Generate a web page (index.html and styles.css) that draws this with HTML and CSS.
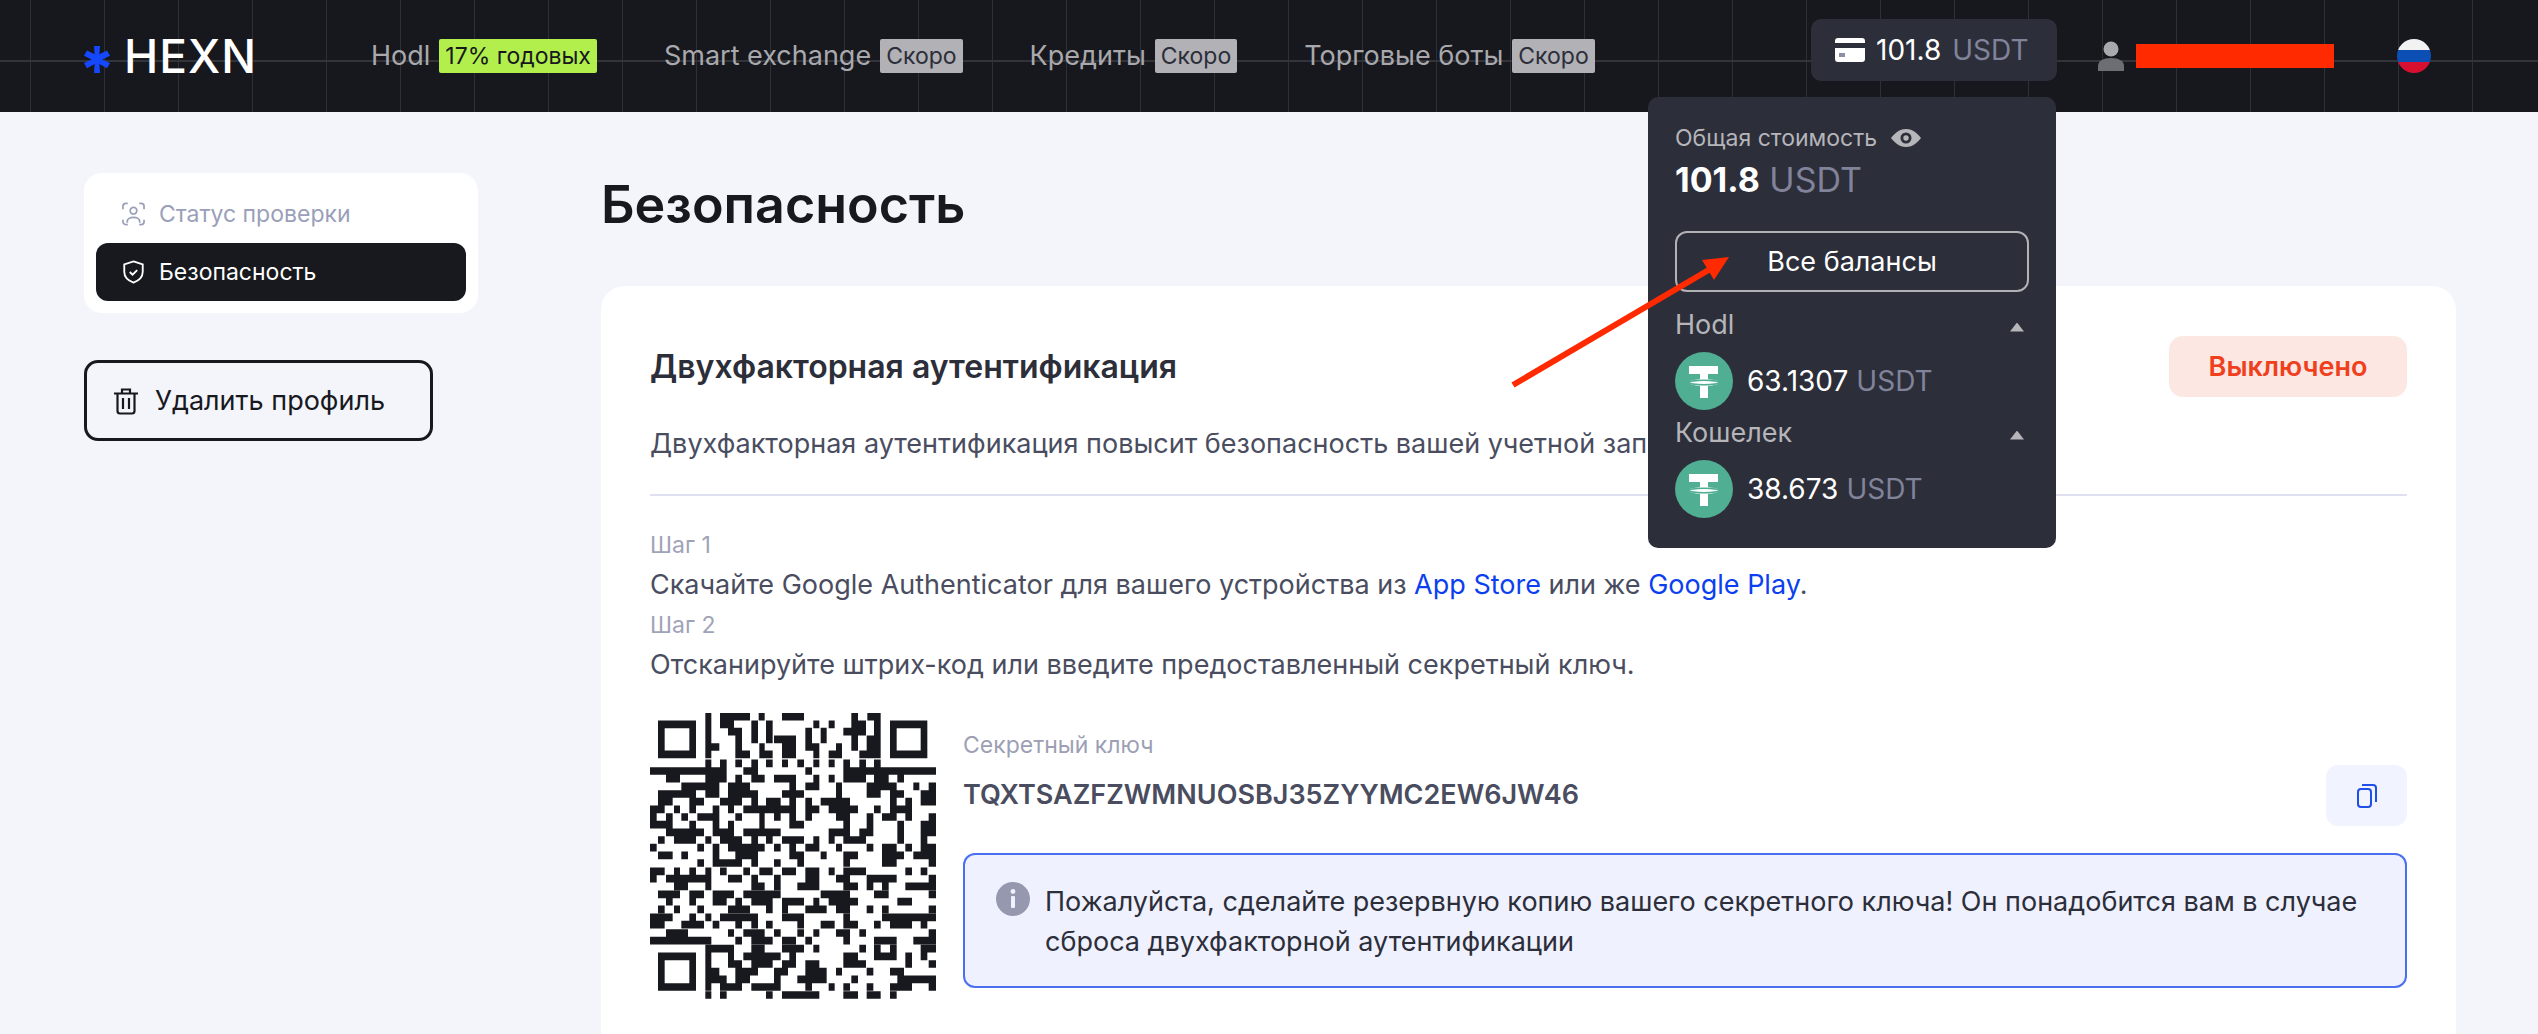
FILE: index.html
```html
<!DOCTYPE html>
<html lang="ru">
<head>
<meta charset="utf-8">
<title>HEXN — Безопасность</title>
<link rel="stylesheet" href="styles.css">
</head>
<body>
<header class="topbar">
  <a class="logo">
    <svg class="logo-star" viewBox="0 0 26 30"><path d="M10 2h6l-.6 8.200L23 6.500l3 5.300-7.600 3.700L26 19l-3 5.300-7.600-4.200L16 29h-6l.6-8.900L3 24.300 0 19l7.600-3.500L0 11.800l3-5.300 7.600 3.700z"/></svg>
    <span class="logo-text">HEXN</span>
  </a>
  <nav class="nav">
    <a class="nav-item">Hodl <span class="tag tag-green">17% годовых</span></a>
    <a class="nav-item">Smart exchange <span class="tag">Скоро</span></a>
    <a class="nav-item">Кредиты <span class="tag">Скоро</span></a>
    <a class="nav-item">Торговые боты <span class="tag">Скоро</span></a>
  </nav>
  <div class="top-right">
    <div class="balance-wrap">
      <div class="balance-pill">
        <svg class="wallet" viewBox="0 0 30 24"><path fill="#fff" d="M3 0h24a3 3 0 0 1 3 3v2H0V3a3 3 0 0 1 3-3zM0 10h30v11a3 3 0 0 1-3 3H3a3 3 0 0 1-3-3z"/><rect x="4" y="15" width="6" height="4" fill="#8d90a3"/></svg>
        <span class="amount">101.8</span> <span class="unit">USDT</span>
      </div>
      <div class="popup">
        <div class="popup-label">Общая стоимость
          <svg class="eye" viewBox="0 0 30 18"><path fill="#b5b5ba" fill-rule="evenodd" d="M15 0c7 0 12 5 15 9-3 4-8 9-15 9S3 13 0 9c3-4 8-9 15-9zm0 3.500a5.500 5.500 0 1 0 0 11 5.500 5.500 0 0 0 0-11zm0 2.800a2.700 2.700 0 1 1 0 5.400 2.700 2.700 0 0 1 0-5.400z"/></svg>
        </div>
        <div class="popup-total"><b>101.8</b> <span class="unit">USDT</span></div>
        <button class="popup-btn">Все балансы</button>
        <div class="popup-group">Hodl <span class="caret"></span></div>
        <div class="coin-row">
          <svg class="tether" viewBox="0 0 58 58"><circle cx="29" cy="29" r="29" fill="#50ae93"/><path fill="#fff" d="M14 14h29v8H33v5.200c6 .3 11 1.500 11 3.300s-5 3-11 3.300V46h-8V33.800c-6-.3-11-1.500-11-3.300s5-3 11-3.300V22H14z"/><ellipse cx="29" cy="30.500" rx="15" ry="2.200" fill="none" stroke="#50ae93" stroke-width="1.600"/></svg>
          <span class="coin-amt">63.1307</span> <span class="unit">USDT</span>
        </div>
        <div class="popup-group">Кошелек <span class="caret"></span></div>
        <div class="coin-row">
          <svg class="tether" viewBox="0 0 58 58"><circle cx="29" cy="29" r="29" fill="#50ae93"/><path fill="#fff" d="M14 14h29v8H33v5.200c6 .3 11 1.500 11 3.300s-5 3-11 3.300V46h-8V33.800c-6-.3-11-1.500-11-3.300s5-3 11-3.300V22H14z"/><ellipse cx="29" cy="30.500" rx="15" ry="2.200" fill="none" stroke="#50ae93" stroke-width="1.600"/></svg>
          <span class="coin-amt">38.673</span> <span class="unit">USDT</span>
        </div>
      </div>
    </div>
    <div class="user">
      <svg class="user-icon" viewBox="0 0 26 30"><circle cx="13" cy="8" r="7.500" fill="#a9a9ad"/><path d="M0 30v-5c0-5 5-8 13-8s13 3 13 8v5z" fill="#6d6e73"/></svg>
      <div class="redact"></div>
    </div>
    <svg class="flag" viewBox="0 0 34 34"><defs><clipPath id="flagclip"><circle cx="17" cy="17" r="17"/></clipPath></defs><g clip-path="url(#flagclip)"><rect width="34" height="11" fill="#f2f2f2"/><rect y="11" width="34" height="12" fill="#0b4fb5"/><rect y="23" width="34" height="11" fill="#d8102f"/></g></svg>
  </div>
</header>

<main class="page">
  <aside class="side">
    <div class="side-card">
      <a class="side-link">
        <svg class="side-icon" viewBox="0 0 24 24" fill="none" stroke="#9a9fba" stroke-width="1.800"><path d="M1 7V4a3 3 0 0 1 3-3h2M18 1h2a3 3 0 0 1 3 3v3M23 18v2a3 3 0 0 1-3 3h-2M6 23H4a3 3 0 0 1-3-3v-2"/><circle cx="12" cy="8.500" r="3.500"/><path d="M5.500 21v-1.500c0-2.500 3-4 6.500-4s6.500 1.500 6.500 4V21"/></svg>
        Статус проверки
      </a>
      <a class="side-link side-active">
        <svg class="side-icon" viewBox="0 0 24 26" fill="none" stroke="#fff" stroke-width="2"><path d="M12 1.500l10 3.300v8c0 6-4.500 9.700-10 11.700-5.500-2-10-5.700-10-11.700v-8z"/><path d="M8 13l3 3 5-5"/></svg>
        Безопасность
      </a>
    </div>
    <button class="delete-btn">
      <svg class="trash" viewBox="0 0 24 28" fill="none" stroke="#18191e" stroke-width="2.200"><path d="M0 6.500h24M8 6V2.500h8V6M3.500 7v17a2.500 2.500 0 0 0 2.500 2.500h12a2.500 2.500 0 0 0 2.500-2.500V7M9 11v11M15 11v11"/></svg>
      Удалить профиль
    </button>
  </aside>

  <section class="content">
    <h1 class="page-title">Безопасность</h1>
    <div class="card">
      <div class="card-head">
        <h2 class="card-title">Двухфакторная аутентификация</h2>
        <span class="status">Выключено</span>
      </div>
      <p class="desc">Двухфакторная аутентификация повысит безопасность вашей учетной записи.</p>
      <hr class="divider">
      <div class="step-label">Шаг 1</div>
      <div class="step-text">Скачайте Google Authenticator для вашего устройства из <a class="link">App Store</a> или же <a class="link">Google Play</a>.</div>
      <div class="step-label">Шаг 2</div>
      <div class="step-text">Отсканируйте штрих-код или введите предоставленный секретный ключ.</div>
      <div class="secret">
        <svg class="qr" viewBox="60 36 858 858">
          <path class="qr-cells" d="M226 47H244M270 47H360M386 47H404M456 47H522M664 47H684M712 47H752
M84 70H198M226 70H244M270 70H312M364 70H384M408 70H428M550 70H568M596 70H614M664 70H708M732 70H752M780 70H892
M84 92H104M178 92H198M226 92H244M294 92H336M364 92H384M408 92H428M526 92H546M572 92H590M640 92H708M732 92H752M780 92H800M872 92H892
M84 115H104M178 115H198M226 115H244M316 115H336M364 115H384M408 115H428M432 115H498M526 115H546M572 115H590M664 115H684M710 115H752M780 115H800M872 115H892
M84 138H104M178 138H198M226 138H268M316 138H336M388 138H404M456 138H498M526 138H568M618 138H636M664 138H684M710 138H752M780 138H800M872 138H892
M84 160H198M226 160H244M316 160H360M388 160H428M456 160H498M550 160H568M596 160H636M688 160H752M780 160H892
M226 187H244M270 187H290M316 187H336M364 187H384M408 187H428M456 187H474M502 187H522M550 187H568M596 187H614M640 187H660M688 187H708M732 187H752
M60 210H290M340 210H384M526 210H546M640 210H918
M108 233H150M226 233H290M316 233H336M364 233H404M432 233H498M550 233H568M596 233H614M640 233H708M732 233H776M802 233H822
M154 256H268M294 256H360M478 256H498M526 256H568M618 256H636M710 256H800M850 256H868M896 256H918
M84 279H198M226 279H268M294 279H384M456 279H522M618 279H636M710 279H752M780 279H822M872 279H918
M84 302H128M178 302H222M270 302H336M364 302H384M408 302H452M478 302H498M526 302H546M572 302H660M780 302H800M826 302H846M872 302H918
M60 325H104M132 325H150M178 325H198M248 325H268M294 325H312M340 325H498M526 325H568M596 325H684M732 325H752M780 325H846
M60 348H80M108 348H128M154 348H174M202 348H268M316 348H336M388 348H404M432 348H452M478 348H498M526 348H546M618 348H660M710 348H730M756 348H800M826 348H846M896 348H918
M60 371H128M178 371H198M248 371H268M294 371H312M388 371H404M478 371H522M640 371H660M710 371H730M802 371H822M872 371H918
M108 394H222M248 394H312M340 394H452M596 394H660M688 394H730M802 394H822M872 394H918
M84 417H104M132 417H198M226 417H244M270 417H336M364 417H384M408 417H428M456 417H522M550 417H568M596 417H614M640 417H708M802 417H822M872 417H892
M60 440H80M202 440H222M248 440H268M294 440H404M432 440H452M478 440H498M526 440H568M618 440H636M710 440H730M756 440H800M826 440H846M872 440H918
M84 463H128M154 463H174M248 463H268M316 463H384M478 463H522M572 463H590M640 463H684M756 463H822M850 463H918
M202 486H222M248 486H336M364 486H384M432 486H452M502 486H522M640 486H660M756 486H800M896 486H918
M60 511H104M132 511H150M178 511H198M226 511H244M270 511H290M340 511H360M388 511H428M456 511H498M526 511H568M596 511H614M640 511H708M826 511H846M872 511H892
M60 533H80M108 533H244M294 533H336M364 533H384M432 533H452M526 533H568M618 533H660M710 533H800M896 533H918
M132 556H174M226 556H244M364 556H404M432 556H452M502 556H568M640 556H684M710 556H730M756 556H776M826 556H918
M84 580H150M178 580H222M248 580H312M340 580H452M572 580H660M732 580H776M896 580H918
M108 602H128M178 602H198M248 602H290M316 602H336M364 602H428M456 602H522M550 602H568M596 602H684M802 602H846
M84 625H104M132 625H150M202 625H222M294 625H360M408 625H428M456 625H474M526 625H590M618 625H660M710 625H730M756 625H776M896 625H918
M60 649H128M178 649H198M226 649H244M270 649H384M456 649H522M640 649H660M756 649H918
M60 671H104M154 671H222M248 671H268M316 671H336M364 671H384M408 671H428M502 671H522M572 671H614M640 671H684M732 671H752M780 671H846M872 671H892
M108 696H174M294 696H312M340 696H404M432 696H452M502 696H522M550 696H568M618 696H660M688 696H708M896 696H918
M60 719H244M316 719H336M364 719H428M456 719H498M526 719H546M640 719H660M732 719H800M850 719H918
M226 743H312M364 743H404M456 743H522M550 743H568M688 743H708M732 743H752M780 743H800M872 743H918
M84 766H198M226 766H244M294 766H312M340 766H452M478 766H498M640 766H684M732 766H800M826 766H846M872 766H892
M84 789H104M178 789H198M226 789H244M294 789H336M364 789H428M456 789H498M526 789H568M640 789H708M826 789H846M896 789H918
M84 812H104M178 812H198M226 812H268M316 812H384M432 812H474M526 812H590M618 812H636M710 812H730M780 812H822
M84 835H104M178 835H198M226 835H290M316 835H360M432 835H452M502 835H590M664 835H684M802 835H918
M84 858H198M226 858H244M270 858H336M364 858H452M526 858H546M596 858H614M640 858H660M710 858H730M780 858H846M896 858H918
M226 882H244M270 882H290M408 882H428M456 882H568M640 882H684M710 882H752M780 882H800"/>
        </svg>
        <div class="secret-body">
          <div class="secret-top">
            <div class="secret-key">
              <div class="secret-label">Секретный ключ</div>
              <div class="secret-value">TQXTSAZFZWMNUOSBJ35ZYYMC2EW6JW46</div>
            </div>
            <button class="copy-btn">
              <svg class="copy" viewBox="0 0 20 24" fill="none" stroke="#1f4ee8" stroke-width="2"><rect x="1" y="5" width="13" height="18" rx="3"/><path d="M5 1h11a3 3 0 0 1 3 3v14"/></svg>
            </button>
          </div>
          <div class="alert">
            <svg class="info" viewBox="0 0 34 34"><circle cx="17" cy="17" r="17" fill="#9598ae"/><rect x="15" y="14" width="4" height="12" rx="1" fill="#eff1fe"/><circle cx="17" cy="9.500" r="2.400" fill="#eff1fe"/></svg>
            <p class="alert-text">Пожалуйста, сделайте резервную копию вашего секретного ключа! Он понадобится вам в случае сброса двухфакторной аутентификации</p>
          </div>
        </div>
      </div>
    </div>
  </section>
</main>

<svg class="annot" viewBox="0 0 2538 1034">
  <path d="M1513 385L1712 268" stroke="#ff2a00" stroke-width="6" fill="none"/>
  <path d="M1729 257L1702 260 1714 280z" fill="#ff2a00"/>
</svg>
</body>
</html>
```
FILE: styles.css
```css
* { box-sizing: border-box; }
html, body { margin: 0; height: 100%; }
body {
  position: relative;
  height: 1034px;
  overflow: hidden;
  background: #f3f5fb;
  font-family: Inter, "Noto Sans", sans-serif;
  color: #2c2e39;
}

.topbar {
  height: 112px;
  padding: 0 107px 0 84px;
  display: flex;
  align-items: center;
  background-color: #17181d;
  background-image:
    linear-gradient(#33343a, #33343a),
    repeating-linear-gradient(90deg, transparent 0 30px, #2f3036 30px 31px, transparent 31px 74px);
  background-size: 100% 2px, 100% 100%;
  background-position: 0 60px, 0 0;
  background-repeat: no-repeat;
}
.logo { display: flex; align-items: center; gap: 14px; width: 287px; height: 50px; padding-top: 0; flex: none; }
.logo-star { width: 26px; height: 30px; fill: #1547ff; margin-top: 6px; }
.logo-text { color: #fff; font-size: 46px; font-weight: 500; letter-spacing: 1px; line-height: 50px; }

.nav { display: flex; gap: 67px; align-items: center; }
.nav-item { display: flex; gap: 9px; align-items: center; color: #a9a9ad; font-size: 27px; line-height: 34px; white-space: nowrap; }
.tag { display: block; background: #b1b1b6; color: #2c2e39; font-size: 23px; line-height: 34px; padding: 0 6px; border-radius: 2px; }
.tag-green { background: #b2ef4d; color: #17181d; }

.top-right { margin-left: auto; display: flex; align-items: center; }
.balance-wrap { position: relative; }
.balance-pill {
  width: 246px;
  height: 62px;
  margin-top: -12px;
  display: flex;
  align-items: center;
  padding-left: 24px;
  gap: 11px;
  background: #2c2e39;
  border-radius: 10px;
  color: #fff;
  font-size: 28px;
}
.wallet { width: 30px; height: 24px; }
.unit { color: #80839a; }

.popup {
  position: absolute;
  top: 66px;
  right: 1px;
  width: 408px;
  height: 451px;
  padding: 24px 27px;
  background: #2c2e39;
  border-radius: 10px;
  z-index: 2;
}
.popup-label { display: flex; align-items: center; gap: 14px; color: #b5b5ba; font-size: 23px; line-height: 34px; }
.eye { width: 30px; height: 18px; }
.popup-total { color: #fff; font-size: 34px; line-height: 46px; margin-top: 2px; }
.popup-total b { font-weight: 700; }
.popup-btn {
  display: block;
  width: 354px;
  height: 61px;
  margin-top: 28px;
  background: transparent;
  border: 2px solid #b1b1b6;
  border-radius: 12px;
  color: #fff;
  font: inherit;
  font-size: 27px;
}
.popup-group { display: flex; justify-content: space-between; align-items: center; color: #b5b5ba; font-size: 27px; line-height: 34px; margin-top: 16px; height: 34px; padding-right: 5px; }
.coin-row + .popup-group { margin-top: 6px; }
.caret { width: 14px; height: 9px; background: #b5b5ba; clip-path: polygon(50% 0, 100% 100%, 0 100%); margin-top: 4px; }
.coin-row { display: flex; align-items: center; height: 58px; margin-top: 10px; gap: 8px; color: #fff; font-size: 28px; }
.tether { width: 58px; height: 58px; margin-right: 6px; }

.user { display: flex; align-items: center; margin-left: 41px; gap: 12px; }
.user-icon { width: 26px; height: 30px; }
.redact { width: 198px; height: 24px; background: #ff2a00; }
.flag { width: 34px; height: 34px; margin-left: 63px; }

.page { display: flex; padding-top: 61px; padding-left: 84px; }
.side { width: 517px; flex: none; }
.side-card { width: 394px; height: 140px; padding: 12px; background: #fff; border-radius: 18px; display: flex; flex-direction: column; }
.side-link { display: flex; align-items: center; height: 58px; gap: 14px; padding-left: 26px; color: #9a9fba; font-size: 23px; border-radius: 12px; }
.side-active { background: #18191e; color: #fff; }
.side-icon { width: 23px; height: 24px; }
.delete-btn {
  display: flex;
  align-items: center;
  gap: 17px;
  width: 349px;
  height: 81px;
  margin-top: 47px;
  padding: 0 0 0 27px;
  background: transparent;
  border: 3px solid #18191e;
  border-radius: 14px;
  color: #18191e;
  font: inherit;
  font-size: 27px;
}
.trash { width: 24px; height: 28px; }

.content { width: 1855px; flex: none; }
.page-title { margin: 0; font-size: 52px; line-height: 64px; font-weight: 600; color: #18191e; }
.card { margin-top: 49px; height: 900px; padding: 50px 49px; background: #fff; border-radius: 24px; }
.card-head { display: flex; justify-content: space-between; align-items: center; }
.card-title { margin: 0; font-size: 32px; line-height: 61px; font-weight: 600; color: #2c2e39; }
.status { display: block; width: 238px; height: 61px; background: #fce7e3; color: #f03f1c; font-size: 27px; font-weight: 600; line-height: 61px; text-align: center; border-radius: 14px; }
.desc { margin: 27px 0 0; font-size: 27px; line-height: 40px; color: #4a4d60; }
.divider { margin: 30px 0 0; height: 2px; border: 0; background: #dfe0f0; }
.step-label { font-size: 23px; line-height: 40px; color: #a0a3b8; }
.divider + .step-label { margin-top: 29px; }
.step-text { font-size: 27px; line-height: 40px; color: #4a4d60; }
.link { color: #0b3ff0; }
.secret { display: flex; gap: 27px; margin-top: 28px; }
.qr { width: 286px; height: 286px; flex: none; }
.qr-cells { fill: none; stroke: #18191e; stroke-width: 23; }
.secret-body { flex: 1; }
.secret-top { display: flex; justify-content: space-between; align-items: flex-start; height: 140px; }
.secret-label { font-size: 23px; line-height: 34px; margin-top: 15px; color: #9da0b4; }
.secret-value { font-size: 27px; line-height: 34px; margin-top: 16px; font-weight: 600; color: #4a4d60; }
.copy-btn { width: 81px; height: 61px; margin-top: 52px; background: #f1f3fe; border: 0; border-radius: 12px; display: flex; align-items: center; justify-content: center; padding: 0; }
.copy { width: 20px; height: 24px; }
.alert { display: flex; gap: 15px; height: 135px; padding: 27px 31px; background: #eff1fe; border: 2px solid #4a6ff0; border-radius: 12px; }
.info { width: 34px; height: 34px; flex: none; }
.alert-text { margin: 0; font-size: 27px; line-height: 40px; color: #2c2e39; }

.annot { position: absolute; left: 0; top: 0; width: 2538px; height: 1034px; pointer-events: none; z-index: 5; }
```
